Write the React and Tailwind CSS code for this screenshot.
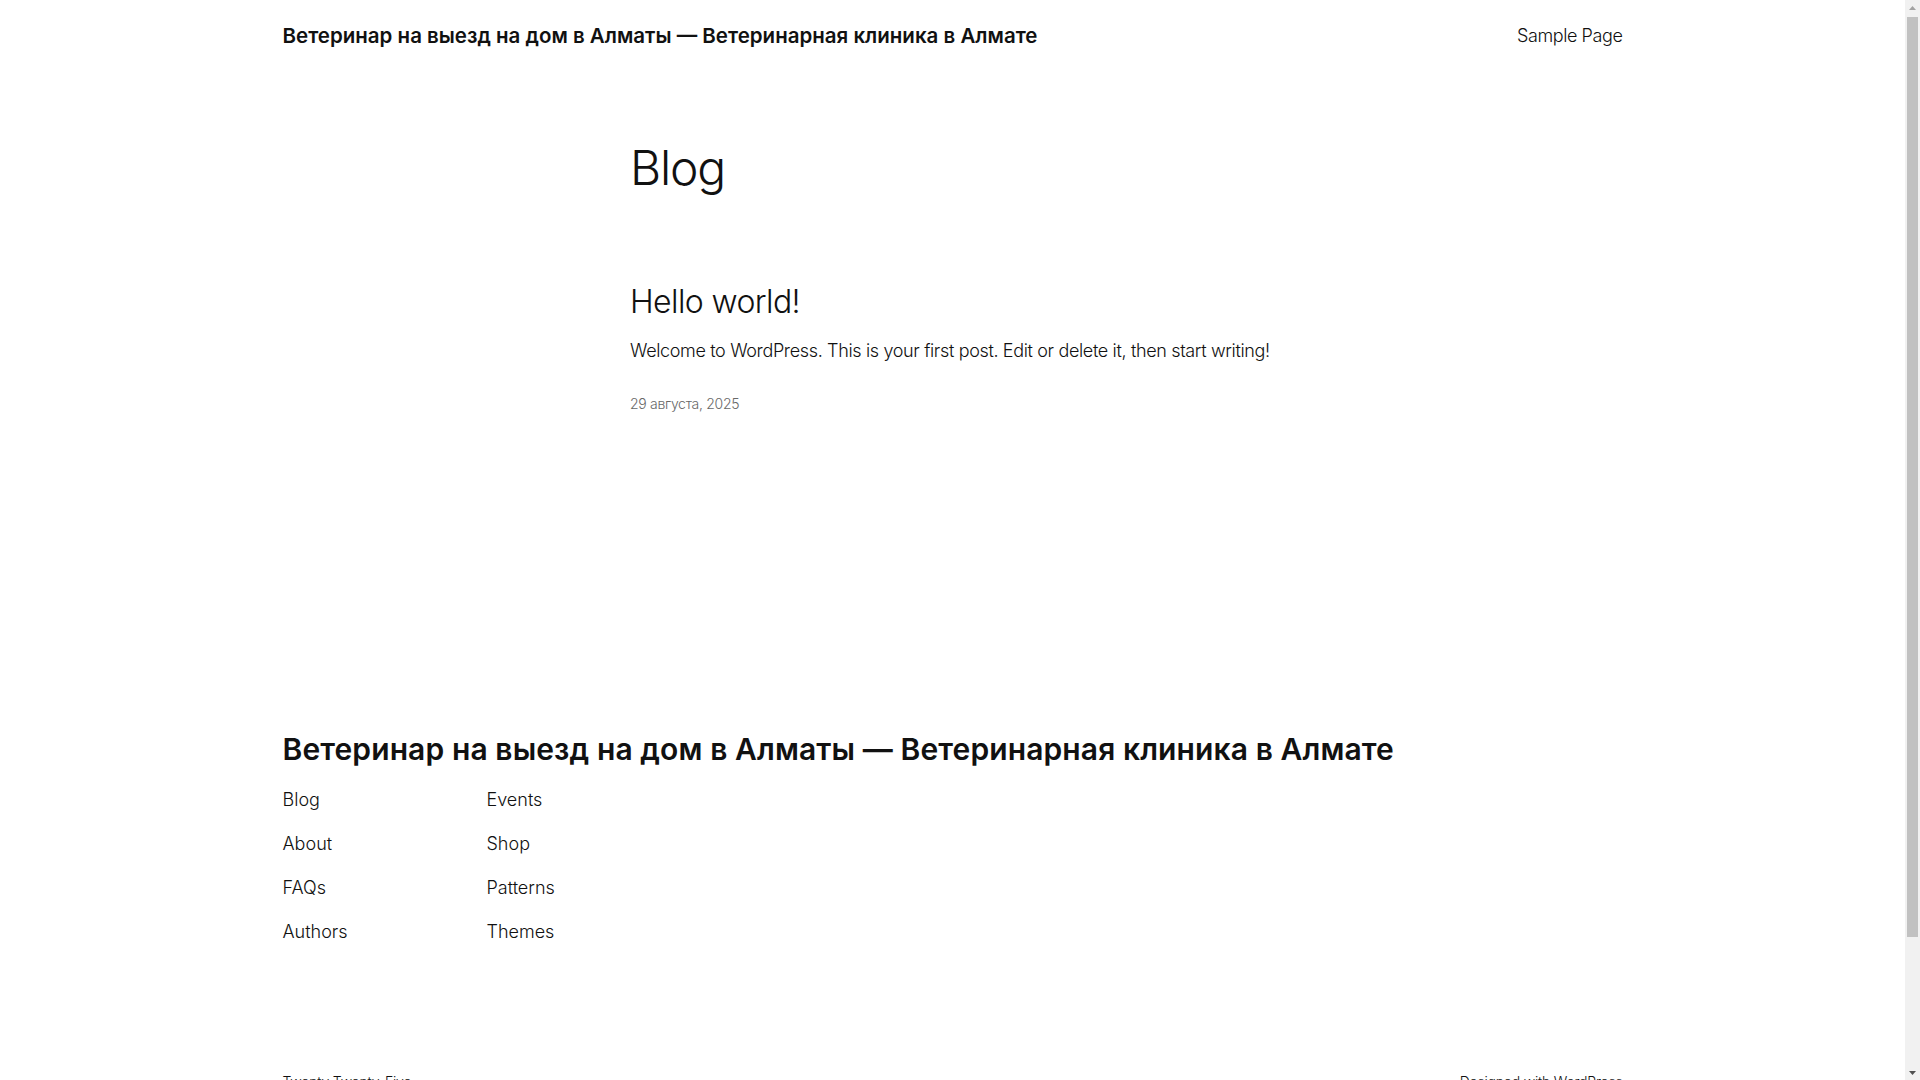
import React from 'react';

const siteTitle = 'Ветеринар на выезд на дом в Алматы — Ветеринарная клиника в Алмате';

const footerLeft = ['Blog', 'About', 'FAQs', 'Authors'];
const footerRight = ['Events', 'Shop', 'Patterns', 'Themes'];

const FooterColumn = ({ items, className = '' }) => (
  <ul className={`flex flex-col gap-[16px] ${className}`}>
    {items.map((item) => (
      <li key={item} className="text-[18px] leading-[28px]">
        <a href="#">{item}</a>
      </li>
    ))}
  </ul>
);

// Classic browser scrollbar drawn on the right edge of the window
const Scrollbar = () => (
  <div className="fixed right-0 top-0 flex h-screen w-[15px] flex-col bg-[#f1f1f1]">
    <div className="flex h-[15px] items-center justify-center">
      <svg width="7" height="4" viewBox="0 0 7 4">
        <path d="M0 4 L3.5 0 L7 4 Z" fill="#a3a3a3" />
      </svg>
    </div>
    <div className="flex-1 px-[2px]">
      <div className="mt-[2px] h-[920px] bg-[#c1c1c1]" />
    </div>
    <div className="flex h-[15px] items-center justify-center">
      <svg width="7" height="4" viewBox="0 0 7 4">
        <path d="M0 0 L7 0 L3.5 4 Z" fill="#505050" />
      </svg>
    </div>
  </div>
);

export default function App() {
  return (
    <div className="min-h-[1230px] bg-white pr-[15px] text-[#111111] font-[family-name:Inter,sans-serif] font-light">
      {/* Header */}
      <header className="mx-auto flex w-[1340px] items-center justify-between pt-[22px] pb-[22px]">
        <a href="#" className="text-[20.5px] font-semibold leading-[28px]">
          {siteTitle}
        </a>
        <nav>
          <a href="#" className="text-[18px] leading-[28px] tracking-[-0.4px]">
            Sample Page
          </a>
        </nav>
      </header>

      {/* Main */}
      <main className="mx-auto w-[645px]">
        <h1 className="mt-[69px] text-[48px] leading-[54px] tracking-[-1.2px]">Blog</h1>

        <article className="mt-[88px]">
          <h2 className="text-[32px] leading-[38px] tracking-[-0.6px]">
            <a href="#">Hello world!</a>
          </h2>
          <p className="mt-[15px] text-[18px] leading-[29px] tracking-[-0.35px]">
            Welcome to WordPress. This is your first post. Edit or delete it, then start writing!
          </p>
          <div className="mt-[28px] text-[14px] leading-[21px] tracking-[-0.3px] text-[#686868]">
            29 августа, 2025
          </div>
        </article>
      </main>

      {/* Footer */}
      <footer className="mx-auto mt-[317px] w-[1340px]">
        <div className="text-[30px] font-semibold leading-[36px] tracking-[0.1px]">
          <a href="#">{siteTitle}</a>
        </div>
        <div className="mt-[19px] flex">
          <FooterColumn items={footerLeft} className="w-[204px]" />
          <FooterColumn items={footerRight} />
        </div>
        <div className="mt-[125px] flex items-center justify-between pb-[60px] text-[14px] leading-[21px] tracking-[-0.2px]">
          <span>Twenty Twenty-Five</span>
          <span>
            Designed with <a href="#" className="underline">WordPress</a>
          </span>
        </div>
      </footer>

      <Scrollbar />
    </div>
  );
}
